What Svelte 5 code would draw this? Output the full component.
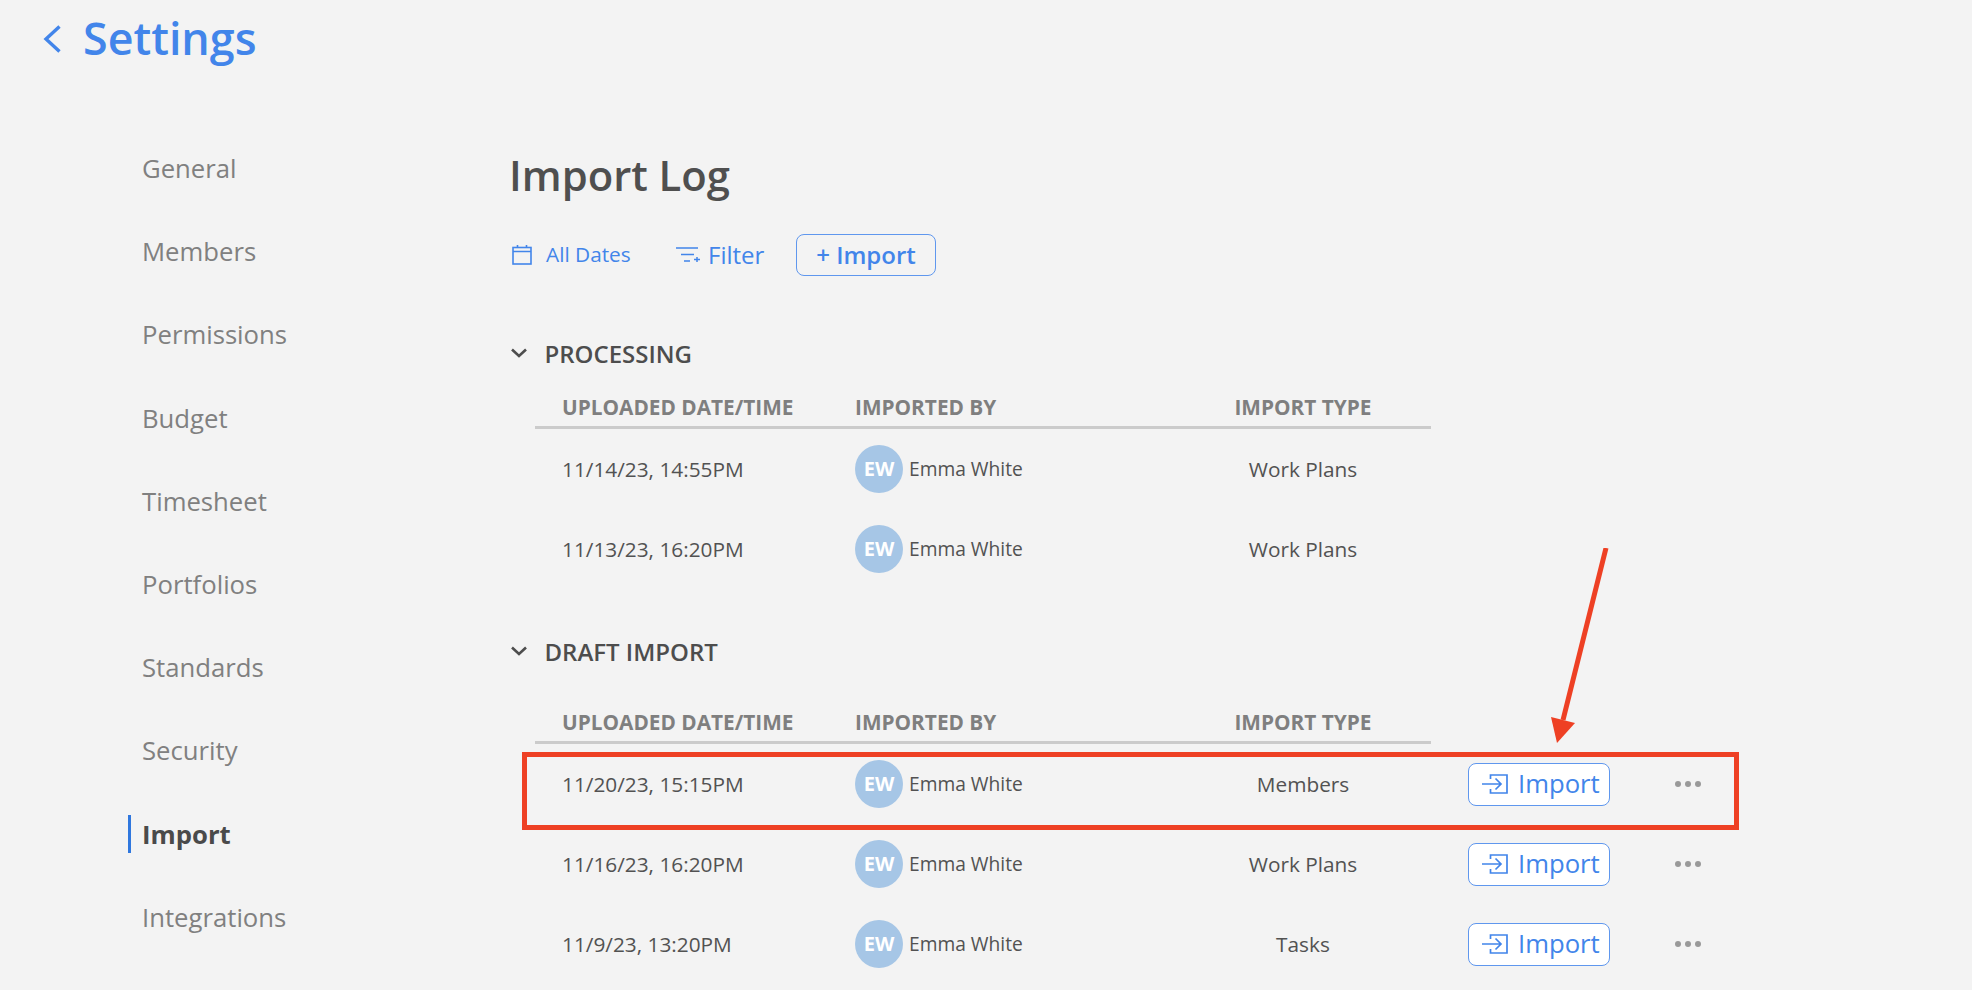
<script lang="ts">
	const navItems = ['General', 'Members', 'Permissions', 'Budget', 'Timesheet', 'Portfolios', 'Standards', 'Security', 'Import', 'Integrations'];
	const processing = [
		{ date: '11/14/23, 14:55PM', type: 'Work Plans' },
		{ date: '11/13/23, 16:20PM', type: 'Work Plans' }
	];
	const drafts = [
		{ date: '11/20/23, 15:15PM', type: 'Members' },
		{ date: '11/16/23, 16:20PM', type: 'Work Plans' },
		{ date: '11/9/23, 13:20PM', type: 'Tasks' }
	];
</script>

{#snippet chevron()}
	<svg class="section-chevron" width="16" height="10" viewBox="0 0 16 10" fill="none" stroke="#4d4d4d" stroke-width="2.6">
		<path d="M1 1.5 L8 8 L15 1.5" />
	</svg>
{/snippet}

{#snippet tableHead()}
	<div class="thead">
		<span class="col-date">UPLOADED DATE/TIME</span>
		<span>IMPORTED BY</span>
		<span class="col-type">IMPORT TYPE</span>
	</div>
{/snippet}

{#snippet person()}
	<div class="person">
		<span class="avatar">EW</span>
		<span>Emma White</span>
	</div>
{/snippet}

<div class="page">
	<header class="top">
		<svg width="18" height="28" viewBox="0 0 18 28" fill="none" stroke="#4285ea" stroke-width="3.4">
			<path d="M16.5 1.5 L3 14 L16.5 26.5" />
		</svg>
		<span class="top-title">Settings</span>
	</header>

	<div class="body">
		<nav class="side">
			{#each navItems as item}
				<div class="nav-item" class:active={item === 'Import'}>{item}</div>
			{/each}
		</nav>

		<main class="main">
			<h1>Import Log</h1>

			<div class="toolbar">
				<div class="tool dates">
					<svg width="20" height="20" viewBox="0 0 20 20" fill="none" stroke="#4285ea" stroke-width="1.6">
						<rect x="1" y="2.5" width="18" height="16.5" />
						<path d="M1 6.5 H19 M5.5 0 V3 M14.5 0 V3" />
					</svg>
					<span>All Dates</span>
				</div>
				<div class="tool filter">
					<svg width="24" height="16" viewBox="0 0 24 16" fill="none" stroke="#4285ea" stroke-width="1.5">
						<path d="M0 1 H22 M5 7.5 H18 M8 14 H14 M18 12.5 H24 M21 10 V15" />
					</svg>
					<span>Filter</span>
				</div>
				<button class="add-btn">+ Import</button>
			</div>

			<section class="processing">
				<div class="section-title">{@render chevron()}<span>PROCESSING</span></div>
				{@render tableHead()}
				{#each processing as row}
					<div class="row">
						<span class="col-date">{row.date}</span>
						{@render person()}
						<span class="col-type">{row.type}</span>
					</div>
				{/each}
			</section>

			<section class="draft">
				<div class="section-title">{@render chevron()}<span>DRAFT IMPORT</span></div>
				{@render tableHead()}
				{#each drafts as row}
					<div class="row">
						<span class="col-date">{row.date}</span>
						{@render person()}
						<span class="col-type">{row.type}</span>
						<button class="import-btn">
							<svg width="26" height="20" viewBox="0 0 26 20" fill="none" stroke="#4285ea" stroke-width="1.7">
								<path d="M8.5 5 V1 H25 V19 H8.5 V15 M0 10 H19 M13.5 4.5 L19 10 L13.5 15.5" />
							</svg>
							<span>Import</span>
						</button>
						<div class="more"><i></i><i></i><i></i></div>
					</div>
				{/each}
			</section>
		</main>
	</div>

	<!-- annotation drawn over the screenshot -->
	<div class="highlight"></div>
	<svg class="arrow" width="80" height="220" viewBox="0 0 80 220">
		<path d="M55 0 L12 172" stroke="#ee4024" stroke-width="5" fill="none" />
		<path d="M0 169 L24 175 L6 195 Z" fill="#ee4024" />
	</svg>
</div>

<style>
	:global(body) {
		margin: 0;
		background: #f3f3f3;
	}

	.page {
		position: relative;
		height: 990px;
		overflow: hidden;
		background: #f3f3f3;
		font-family: 'Open Sans', sans-serif;
		color: #4d4d4d;
	}

	.top {
		display: flex;
		align-items: center;
		gap: 22px;
		height: 78px;
		padding-left: 43px;
		color: #4285ea;
	}

	.top-title {
		font-size: 44.8px;
		font-weight: 600;
		margin-top: -3px;
	}

	.body {
		display: flex;
	}

	.side {
		flex: none;
		width: 510px;
		padding-top: 49px;
		padding-left: 128px;
		box-sizing: border-box;
	}

	.nav-item {
		display: flex;
		align-items: center;
		height: 83.2px;
		padding-left: 14px;
		font-size: 25.7px;
		color: #808080;
		position: relative;
	}

	.nav-item.active {
		font-weight: 700;
		color: #4a4a4a;
	}

	.nav-item.active::before {
		content: '';
		position: absolute;
		left: 0;
		top: 22px;
		width: 3px;
		height: 38px;
		background: #2f77de;
	}

	.main {
		flex: 1;
	}

	h1 {
		margin: 0 0 0 -1px;
		padding-top: 67px;
		font-size: 41.8px;
		line-height: 60px;
		font-weight: 600;
		color: #4f4f4f;
	}

	.toolbar {
		display: flex;
		align-items: center;
		margin-top: 29px;
		height: 42px;
		color: #4285ea;
	}

	.tool {
		display: flex;
		align-items: center;
	}

	.tool span {
		margin-top: -2px;
	}

	.dates {
		font-size: 20.8px;
		gap: 14px;
		margin-left: 2px;
		width: 164px;
	}

	.filter {
		font-size: 24px;
		gap: 8px;
		width: 120px;
	}

	.add-btn {
		width: 140px;
		height: 42px;
		padding: 0 0 2px;
		border: 1px solid #5f97ee;
		border-radius: 8px;
		background: transparent;
		color: #4285ea;
		font: 600 24px 'Open Sans', sans-serif;
	}

	.processing {
		margin-top: 59px;
	}

	.draft {
		margin-top: 44px;
	}

	.section-title {
		display: flex;
		align-items: center;
		gap: 17.5px;
		height: 36px;
		font-size: 24px;
		font-weight: 600;
		color: #4d4d4d;
	}

	.section-chevron {
		margin-left: 1px;
	}

	.thead,
	.row {
		display: grid;
		align-items: center;
		margin-left: 25px;
	}

	.thead {
		width: 896px;
		height: 39px;
		margin-top: 16px;
		grid-template-columns: 320px 320px 256px;
		border-bottom: 3px solid #cbcbcb;
		font-size: 20.8px;
		font-weight: 700;
		color: #7f7f7f;
	}

	.draft .thead {
		margin-top: 33px;
	}

	.row {
		height: 80px;
		grid-template-columns: 320px 320px 256px 179px auto;
		font-size: 20.8px;
		color: #525252;
	}

	.col-date {
		padding-left: 27px;
	}

	.col-type {
		text-align: center;
	}

	.person {
		display: flex;
		align-items: center;
		gap: 6px;
		margin-bottom: 1px;
		font-size: 19.2px;
	}

	.avatar {
		display: grid;
		place-items: center;
		width: 48px;
		height: 48px;
		border-radius: 50%;
		background: #a6c6e6;
		color: #fff;
		font-size: 20px;
		font-weight: 700;
	}

	.import-btn {
		display: flex;
		align-items: center;
		gap: 10px;
		width: 142px;
		height: 43px;
		margin-left: 37px;
		padding: 0 0 0 13px;
		border: 1px solid #5f97ee;
		border-radius: 8px;
		background: #fff;
		color: #4285ea;
		font: 400 25.7px 'Open Sans', sans-serif;
	}

	.import-btn span {
		margin-top: -2px;
	}

	.more {
		display: flex;
		gap: 4px;
		margin-bottom: 1px;
		margin-left: 65px;
	}

	.more i {
		width: 6px;
		height: 6px;
		border-radius: 50%;
		background: #999;
	}

	.highlight {
		position: absolute;
		left: 522px;
		top: 752px;
		width: 1217px;
		height: 78px;
		box-sizing: border-box;
		border: 5px solid #ee4024;
	}

	.arrow {
		position: absolute;
		left: 1551px;
		top: 548px;
	}
</style>
